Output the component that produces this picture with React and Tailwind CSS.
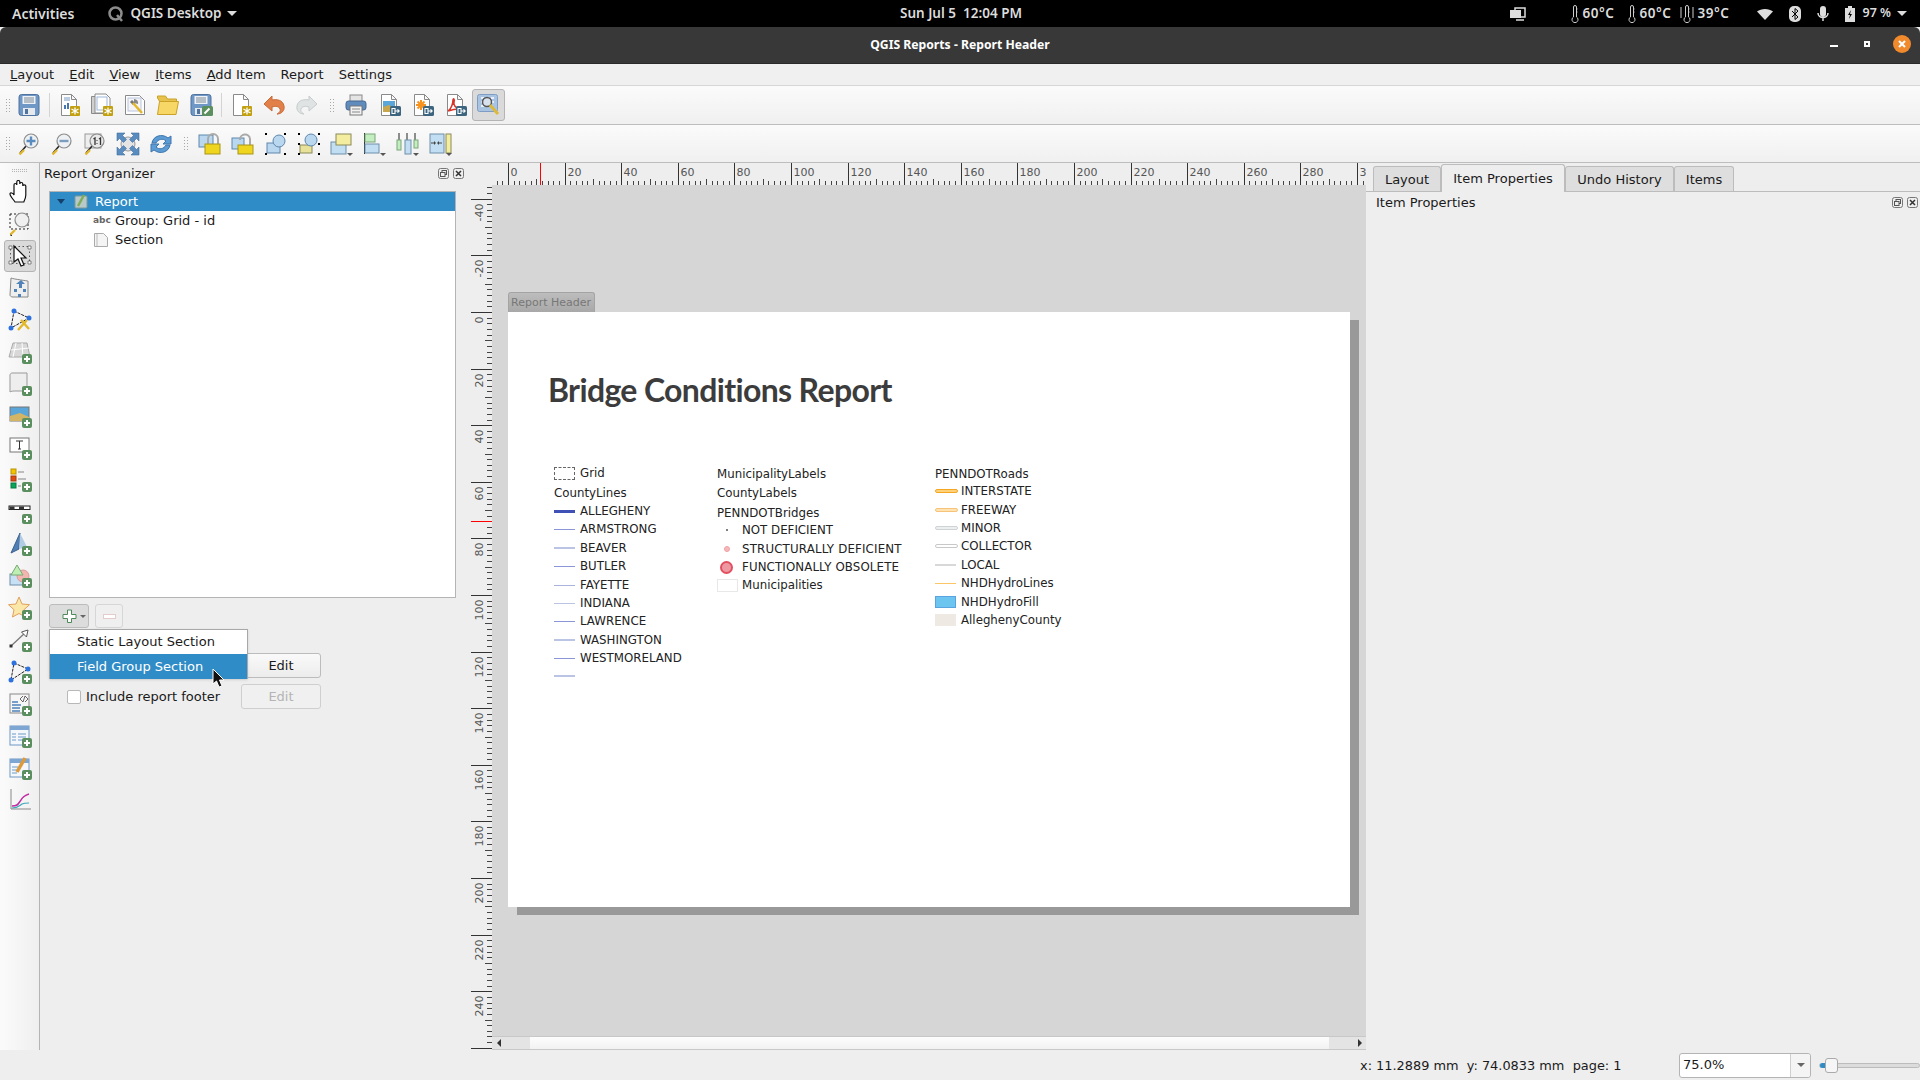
import React from "react";

const BLUE = "#308cc6";

// ---- small shared svg pieces ----
const Ic = ({ children, size = 24 }) => (
  <svg width={size} height={size} viewBox="0 0 24 24" className="shrink-0">{children}</svg>
);
const Plus = ({ x = 14, y = 14 }) => (
  <g>
    <rect x={x} y={y} width="10" height="10" rx="2" fill="#5b8f5f" />
    <path d={`M${x + 5} ${y + 2}v6M${x + 2} ${y + 5}h6`} stroke="#fff" strokeWidth="2" />
  </g>
);
const Gear = ({ x = 13, y = 13 }) => (
  <g>
    <rect x={x} y={y} width="10" height="10" rx="1" fill="#c2a010" />
    <path d={`M${x + 5} ${y + 1.5}v7M${x + 1.5} ${y + 3}l7 4M${x + 8.5} ${y + 3}l-7 4`} stroke="#fff" strokeWidth="1.3" />
  </g>
);
const Exp = () => (
  <g>
    <rect x="13" y="13" width="11" height="10" rx="1.5" fill="#3e6580" />
    <path d="M15 15.5h3v5h-3zM18 18h4M20.5 16.3l1.7 1.7-1.7 1.7" fill="none" stroke="#fff" strokeWidth="1.1" />
  </g>
);
const Page = ({ fill = "#fff" }) => (
  <path d="M4.5 1.5h10l5 5v16h-15z M14.5 1.5v5h5" fill={fill} stroke="#8a8a8a" strokeWidth="1" />
);
const Mag = ({ cx = 14, cy = 9, r = 7, fill = "#eef1f4" }) => (
  <g>
    <path d={`M${cx - r * 0.7} ${cy + r * 0.7}L3 21`} stroke="#222" strokeWidth="1.5" />
    <path d="M2.5 22.5l4.5-4.5" stroke="#e2b72c" strokeWidth="2.4" />
    <circle cx={cx} cy={cy} r={r} fill={fill} stroke="#8c8c8c" strokeWidth="1.2" />
  </g>
);
const Floppy = () => (
  <g>
    <rect x="2" y="1.5" width="20" height="21" rx="2.5" fill="#6f98c6" stroke="#4f729e" />
    <rect x="5.5" y="3" width="13" height="8" fill="#eef1f5" />
    <path d="M7 5h10M7 7h10M7 9h10" stroke="#7d8a99" />
    <rect x="6" y="15" width="12" height="7" fill="#e6e9ee" />
    <rect x="8" y="16" width="3" height="5" fill="#4f729e" />
  </g>
);

const icons = {
  save: <Floppy />,
  newReport: (
    <g>
      <Page fill="#fdfdfd" />
      <path d="M7 5h6M7 7h6" stroke="#7a9cc6" />
      <path d="M8 16v-4M11 16v-6" stroke="#4a76b0" strokeWidth="2" />
      <path d="M14 16v-2" stroke="#c65a5a" strokeWidth="2" />
      <Gear />
    </g>
  ),
  dup: (
    <g>
      <path d="M1.5 3.5h15v17h-15z" fill="#cfcfcf" stroke="#8a8a8a" />
      <path d="M5 1h11l4 4v15H5z" fill="#fff" stroke="#8a8a8a" />
      <rect x="7" y="4" width="10" height="13" fill="#fff" stroke="#9db7da" />
      <Gear />
    </g>
  ),
  manager: (
    <g>
      <path d="M2.5 2.5h14l5 5v14h-19z" fill="#fff" stroke="#8a8a8a" />
      <rect x="5" y="5" width="13" height="13" fill="#f4f4f8" stroke="#b8c5dc" />
      <path d="M8 8l3 3" stroke="#777" strokeWidth="3" />
      <path d="M10 10l9 10" stroke="#e2b72c" strokeWidth="2.6" />
      <path d="M11 6a4 4 0 0 1 4 5l-4-1z" fill="#888" />
    </g>
  ),
  open: (
    <g>
      <path d="M1.5 5V3h8l2 3h9v3H4z" fill="#e7c24c" stroke="#c9a227" />
      <path d="M3.5 8.5h19l-2.5 13H1.5z" fill="#f7d766" stroke="#c9a227" />
    </g>
  ),
  saveAs: (
    <g>
      <Floppy />
      <rect x="13" y="13" width="11" height="10" rx="1.5" fill="#5b8f5f" />
      <path d="M15.5 20.5l5-5" stroke="#fff" strokeWidth="2" />
    </g>
  ),
  newPage: (
    <g>
      <Page />
      <Gear />
    </g>
  ),
  undo: <path d="M10 3L2 11l8 7v-4c3-1 7-1 8 2 1 2-1 4-3 5 4 0 8-3 7-8-1-6-7-7-12-6z" fill="#e2804a" stroke="#c86a35" />,
  redo: <path d="M14 3l8 8-8 7v-4c-3-1-7-1-8 2-1 2 1 4 3 5-4 0-8-3-7-8 1-6 7-7 12-6z" fill="#dfe3e3" stroke="#c7cccc" />,
  print: (
    <g>
      <rect x="6" y="2" width="12" height="7" fill="#e4e4e4" stroke="#8a8a8a" />
      <rect x="2" y="8" width="20" height="9" rx="2.5" fill="#5f8bbd" stroke="#46688f" />
      <rect x="6" y="13" width="12" height="9" fill="#f2f2f2" stroke="#777" />
      <path d="M8 16h8M8 19h8" stroke="#888" />
    </g>
  ),
  expImg: (
    <g>
      <Page />
      <rect x="6" y="8" width="12" height="11" fill="#5aa6d8" />
      <path d="M6 19v-5l6-2 6 4v3z" fill="#c7a64e" />
      <Exp />
    </g>
  ),
  expSvg: (
    <g>
      <Page />
      <path d="M11 7v10M6 12h10M7.5 8.5l7 7M14.5 8.5l-7 7" stroke="#f5931e" strokeWidth="2" />
      <Exp />
    </g>
  ),
  expPdf: (
    <g>
      <Page />
      <path d="M5 18c3-2 5-7 5-11 0-2 2-1 1 2-1 3 2 6 5 7M5 18c3-1 7-2 11-2" fill="none" stroke="#d8352a" strokeWidth="1.6" />
      <Exp />
    </g>
  ),
  itemProps: (
    <g>
      <rect x="1.5" y="1.5" width="20" height="17" rx="2" fill="#a9c4e3" stroke="#7f9dc2" />
      <path d="M5 5h3M10 5h3M15 5h3M5 9h4M14 9h4M5 13h4" stroke="#fff" strokeWidth="1.4" />
      <circle cx="11" cy="9" r="4.5" fill="#d9e2ec" stroke="#555" strokeWidth="1.5" />
      <path d="M14 12l8 9" stroke="#dcb93c" strokeWidth="3" />
    </g>
  ),
  zoomIn: (
    <g>
      <Mag />
      <path d="M14 4.5v9M9.5 9h9" stroke="#5b8cc0" strokeWidth="2.4" />
    </g>
  ),
  zoomOut: (
    <g>
      <Mag />
      <path d="M9.5 9h9" stroke="#7c9cc0" strokeWidth="2.4" />
    </g>
  ),
  zoom100: (
    <g>
      <rect x="2" y="2" width="16" height="14" fill="#eee" stroke="#999" />
      <Mag fill="#e8e8e8" />
      <path d="M10.5 7l1.5-1v7M16 7l1.5-1v7" fill="none" stroke="#333" strokeWidth="1.3" />
      <path d="M14 8v.8M14 11v.8" stroke="#333" strokeWidth="1.3" />
    </g>
  ),
  zoomFull: (
    <g>
      <circle cx="12" cy="12" r="7" fill="#e4e4e4" stroke="#999" />
      <path d="M1 1h8l-2.5 2.5 4 4-3 3-4-4L1 9zM23 1v8l-2.5-2.5-4 4-3-3 4-4L15 1zM1 23v-8l2.5 2.5 4-4 3 3-4 4L9 23zM23 23h-8l2.5-2.5-4-4 3-3 4 4L23 15z" fill="#5b8cc0" stroke="#3f6ea3" strokeWidth="0.6" />
    </g>
  ),
  refresh: (
    <g>
      <path d="M3 11C4 4 13 1 19 6l3-2v8h-8l3-3c-3-3-8-2-10 2z" fill="#5d9bd4" stroke="#3f76ad" />
      <path d="M21 13c-1 7-10 10-16 5l-3 2v-8h8l-3 3c3 3 8 2 10-2z" fill="#5d9bd4" stroke="#3f76ad" />
    </g>
  ),
  lock: (
    <g>
      <rect x="1" y="3" width="14" height="12" fill="#b9d7ef" stroke="#5f87ab" />
      <path d="M10 13V7a5 5 0 0 1 10 0v6" fill="none" stroke="#aaa" strokeWidth="2" />
      <rect x="7" y="12" width="15" height="10" fill="#f0d51e" stroke="#a8951a" />
    </g>
  ),
  unlock: (
    <g>
      <rect x="1" y="6" width="12" height="11" fill="#b9d7ef" stroke="#5f87ab" />
      <path d="M9 8a5 5 0 0 1 10-1v6" fill="none" stroke="#aaa" strokeWidth="2" />
      <rect x="7" y="13" width="15" height="9" fill="#f0d51e" stroke="#a8951a" />
    </g>
  ),
  group: (
    <g>
      <rect x="3" y="11" width="13" height="10" fill="#b9d7ef" stroke="#5f87ab" />
      <circle cx="15" cy="9" r="6" fill="#b9d7ef" stroke="#5f87ab" />
      <path d="M1 1h2v2H1zM20 1h2v2h-2zM1 21h2v2H1zM20 21h2v2h-2z" fill="#000" />
    </g>
  ),
  ungroup: (
    <g>
      <rect x="3" y="13" width="12" height="8" fill="#e8e19a" stroke="#8a8a5a" />
      <circle cx="14" cy="8" r="6" fill="#b9d7ef" stroke="#5f87ab" />
      <path d="M1 1h2v2H1zM21 1h2v2h-2zM1 21h2v2H1zM21 21h2v2h-2zM1 11h2v2H1zM21 11h2v2h-2z" fill="#000" />
    </g>
  ),
  raise: (
    <g>
      <rect x="1" y="10" width="15" height="12" fill="#c2def3" stroke="#6f8faa" />
      <rect x="6" y="2" width="15" height="11" fill="#f3eda0" stroke="#8a8a5a" />
      <path d="M17 21h6l-3 3z" fill="#555" />
    </g>
  ),
  align: (
    <g>
      <path d="M1.5 1v21" stroke="#222" />
      <rect x="2" y="2" width="10" height="8" fill="#c3eec0" stroke="#7aa67a" />
      <rect x="2" y="12" width="14" height="9" fill="#c2def3" stroke="#6f8faa" />
      <path d="M17 21h6l-3 3z" fill="#555" />
    </g>
  ),
  distribute: (
    <g>
      <path d="M3 1v7M11 1v7M19 1v7" stroke="#222" />
      <rect x="1" y="8" width="4" height="10" fill="#c3eec0" stroke="#7aa67a" />
      <rect x="9" y="8" width="6" height="14" fill="#c2def3" stroke="#6f8faa" />
      <rect x="18" y="8" width="4" height="8" fill="#c3eec0" stroke="#7aa67a" />
      <path d="M17 21h6l-3 3z" fill="#555" />
    </g>
  ),
  resize: (
    <g>
      <rect x="1" y="2" width="14" height="19" fill="#c2def3" stroke="#6f8faa" />
      <rect x="17" y="2" width="5" height="19" fill="#f3eda0" stroke="#8a8a5a" />
      <path d="M2 11h3M13 11h-3" stroke="#444" />
      <path d="M5 9l2 2-2 2zM10 9l-2 2 2 2z" fill="#444" />
      <path d="M17 21h6l-3 3z" fill="#555" />
    </g>
  ),
  pan: (
    <path d="M7 22c-2-3-5-6-5-8 0-2 3-1 4 1V5c0-2 2.5-2 2.8 0V2c0-2 3-2 3 0v2c0-2 3-2 3 0v2c0-1.5 3-1.5 3 0v9c0 3-1 5-2 7z" fill="#fff" stroke="#111" strokeWidth="1.2" />
  ),
  zoomTool: (
    <g>
      <rect x="2" y="2" width="18" height="15" fill="none" stroke="#222" strokeDasharray="2 2" />
      <Mag cx="14" cy="8" r="7" fill="#f0f0f0" />
    </g>
  ),
  select: (
    <g>
      <rect x="2.5" y="2.5" width="19" height="17" fill="none" stroke="#555" strokeDasharray="1.5 2.5" />
      <path d="M1 2h3v3H1zM1 17h3v3H1zM20 2h3v3h-3zM20 17h3v3h-3z" fill="#fff" stroke="#555" strokeWidth="0.7" />
      <path d="M6 2v16l4-3 3 7 3-1-3-7h5z" fill="#fff" stroke="#111" strokeWidth="1.2" />
    </g>
  ),
  moveContent: (
    <g>
      <path d="M3 2c2 1 17 3 17 3v16H5c-2 0-3-1-3-2z" fill="#eee" stroke="#888" />
      <path d="M13 4l4 4h-3v4h-3V8H8zM6 13h3v3H6zM15 13h3v3h-3zM10 18h3v3h-3z" fill="#4f82b8" />
    </g>
  ),
  nodes: (
    <g>
      <path d="M6 3L21 10 3 20z" fill="none" stroke="#222" strokeDasharray="3 1" />
      <circle cx="6" cy="3" r="2.5" fill="#2e72e0" />
      <circle cx="21" cy="10" r="2.5" fill="#2e72e0" />
      <circle cx="3" cy="20" r="2.5" fill="#2e72e0" />
      <path d="M10 22l9-10M13 12l8 9" stroke="#e2b72c" strokeWidth="2.4" />
    </g>
  ),
  addMap: (
    <g>
      <path d="M5 3h14l3 14H1z" fill="#d8d8d8" stroke="#aaa" />
      <path d="M3 10l18-2M8 3L5 17M14 3l1 14" stroke="#fff" />
      <Plus />
    </g>
  ),
  add3d: (
    <g>
      <path d="M4 1h15v18H6c-3 0-4 1-4 1V3c0-1 1-2 2-2z" fill="#eee" stroke="#999" />
      <Plus />
    </g>
  ),
  addPic: (
    <g>
      <rect x="2" y="3" width="19" height="14" fill="#5aa6d8" stroke="#777" />
      <path d="M2 17v-5l10-3 9 4v4z" fill="#d4b465" />
      <Plus />
    </g>
  ),
  addLabel: (
    <g>
      <rect x="2" y="2" width="19" height="14" fill="#fff" stroke="#777" />
      <path d="M8 5h7M11.5 5v8M10 13h3" stroke="#333" />
      <Plus />
    </g>
  ),
  addLegend: (
    <g>
      <rect x="3" y="1" width="5" height="5" fill="#f5c400" stroke="#b89300" />
      <rect x="3" y="8" width="5" height="5" fill="#e04a10" stroke="#a33a0c" />
      <rect x="3" y="15" width="5" height="5" fill="#0aa55a" stroke="#087a42" />
      <path d="M10 4h6M10 11h8M10 18h3" stroke="#aaa" strokeWidth="1.5" />
      <Plus />
    </g>
  ),
  addScale: (
    <g>
      <rect x="1" y="6" width="21" height="3.5" fill="#fff" stroke="#222" />
      <path d="M1.5 8h5M11 8h5" stroke="#333" strokeWidth="3" />
      <Plus />
    </g>
  ),
  addNorth: (
    <g>
      <path d="M12 1L3 21l8-4z" fill="#4f7fb5" stroke="#3b618c" />
      <path d="M12 1l7 14-8 2z" fill="#b3cce6" />
      <Plus />
    </g>
  ),
  addShape: (
    <g>
      <rect x="2" y="10" width="17" height="11" fill="#c8e0f3" stroke="#6f8faa" />
      <circle cx="15" cy="12" r="6" fill="#f3b5b0" stroke="#d99" />
      <path d="M9 1l6 10H3z" fill="#bfeeb5" stroke="#79a873" />
      <Plus />
    </g>
  ),
  addStar: (
    <g>
      <path d="M11 1l3 7 7.5.7-5.500 5 1.500 7.300L11 17.500 4.500 21 6 13.700.5 8.700 8 8z" fill="#fbe7a8" stroke="#e0a060" />
      <Plus />
    </g>
  ),
  addArrow: (
    <g>
      <path d="M3 18L18 4" stroke="#777" strokeWidth="1.2" />
      <path d="M20 2l-1.5 7-5-5z" fill="#fff" stroke="#555" />
      <rect x="1.5" y="16.5" width="3" height="3" fill="#333" />
      <Plus />
    </g>
  ),
  addNode: (
    <g>
      <path d="M6 3L20 9 3 20z" fill="none" stroke="#222" strokeDasharray="3 1" />
      <circle cx="6" cy="3" r="2.5" fill="#2e72e0" />
      <circle cx="20" cy="9" r="2.5" fill="#2e72e0" />
      <circle cx="3" cy="20" r="2.5" fill="#2e72e0" />
      <Plus />
    </g>
  ),
  addHtml: (
    <g>
      <rect x="2" y="2" width="19" height="19" fill="#f6f6f6" stroke="#888" />
      <path d="M4 10h6M4 13h9M4 16h8M4 19h8" stroke="#4f82b8" strokeWidth="1.5" />
      <path d="M12 7l3-3M12 7l3 3M15 10l2-6M20 7l-3-3M20 7l-3 3" stroke="#444" strokeWidth="0.8" fill="none" />
      <Plus />
    </g>
  ),
  addTable: (
    <g>
      <rect x="2" y="2" width="19" height="19" fill="#f4f8fc" stroke="#6f98c6" />
      <rect x="2" y="2" width="19" height="4" fill="#7ea6d2" />
      <path d="M4 10h4M10 10h8M4 13h4M10 13h8M4 16h4M10 16h5" stroke="#6f98c6" />
      <Plus />
    </g>
  ),
  addTableEdit: (
    <g>
      <rect x="2" y="3" width="19" height="18" fill="#f4f8fc" stroke="#6f98c6" />
      <rect x="2" y="3" width="19" height="4" fill="#7ea6d2" />
      <path d="M4 11h6M4 14h5M4 17h5" stroke="#6f98c6" />
      <path d="M9 16L17 2" stroke="#dd9a3c" strokeWidth="3.5" />
      <Plus />
    </g>
  ),
  chart: (
    <g>
      <path d="M3 1v20h20" fill="none" stroke="#888" />
      <path d="M4 18c6 0 6-2 9-6 2-4 5-5 8-6" fill="none" stroke="#c02aa0" strokeWidth="1.5" />
      <path d="M4 20c6 0 7-2 10-4 2-1 5-1 7-1" fill="none" stroke="#3aa8b8" strokeWidth="1.2" />
    </g>
  ),
};

const Grip = () => (
  <div className="grid grid-cols-2 gap-[2px] shrink-0 w-[4px]">
    {[0, 1, 2, 3, 4, 5, 6, 7, 8, 9].map((i) => (
      <span key={i} className="w-[1px] h-[1px] bg-[#a8a8a8]" />
    ))}
  </div>
);
const GripH = () => (
  <div className="grid grid-cols-8 gap-[1px] shrink-0">
    {Array.from({ length: 16 }).map((_, i) => (
      <span key={i} className="w-[1px] h-[1px] bg-[#b4b4b4]" />
    ))}
  </div>
);
const Sep = () => <div className="w-[1px] h-[24px] bg-[#d4d4d4] mx-[3px] shrink-0" />;

function TB({ name, active }) {
  return (
    <div
      className={`relative w-[33px] h-[32px] flex items-center justify-center shrink-0 rounded-[3px] ${
        active ? "bg-[#dadada] border border-[#b4b4b4]" : ""
      }`}
    >
      <Ic>{icons[name]}</Ic>
    </div>
  );
}

const T1 = ["save", "|", "newReport", "dup", "manager", "open", "saveAs", "|", "newPage", "undo", "redo", "#", "print", "expImg", "expSvg", "expPdf", "itemProps"];
const T2 = ["zoomIn", "zoomOut", "zoom100", "zoomFull", "refresh", "#", "lock", "unlock", "group", "ungroup", "raise", "align", "distribute", "resize"];
const LEFT = ["pan", "zoomTool", "select", "moveContent", "nodes", "addMap", "add3d", "addPic", "addLabel", "addLegend", "addScale", "addNorth", "addShape", "addStar", "addArrow", "addNode", "addHtml", "addTable", "addTableEdit", "chart"];

function Toolbar({ items, className }) {
  return (
    <div className={`flex items-center pl-[6px] bg-gradient-to-b from-[#fbfbfb] to-[#f0f0f0] border-b border-[#bdbdbd] ${className}`}>
      <Grip />
      <div className="w-[2.5px] shrink-0" />
      {items.map((it, i) =>
        it === "|" ? (
          <Sep key={i} />
        ) : it === "#" ? (
          <div key={i} className="mx-[6px] shrink-0"><Grip /></div>
        ) : (
          <TB key={i} name={it} active={it === "itemProps"} />
        )
      )}
    </div>
  );
}

const FloatIcons = () => (
  <div className="flex gap-[4px]">
    <svg width="11" height="11" viewBox="0 0 11 11"><rect x="0.5" y="0.5" width="10" height="10" rx="2" fill="none" stroke="#777" /><rect x="4" y="2.5" width="4.5" height="4" fill="none" stroke="#555" /><rect x="2.5" y="4.5" width="4.5" height="4" fill="#eee" stroke="#555" /></svg>
    <svg width="11" height="11" viewBox="0 0 11 11"><rect x="0.5" y="0.5" width="10" height="10" rx="2" fill="none" stroke="#777" /><path d="M3 3l5 5M8 3l-5 5" stroke="#333" strokeWidth="1.5" /></svg>
  </div>
);

function HRuler() {
  const W = 895;
  const org = 37; // x of 0 within the ruler
  const ticks = [];
  for (let u = -4; u <= 304; u += 2) {
    const x = Math.round(org + u * 2.83) + 0.5;
    const major = u % 20 === 0;
    const mid = u % 10 === 0;
    ticks.push(<path key={u} d={`M${x} ${major ? 0 : mid ? 16 : 18}V22`} stroke={major ? "#333" : "#444"} />);
    if (major && u >= 0)
      ticks.push(<text key={`t${u}`} x={x + 2} y="13" fontSize="11" fill="#555" fontFamily="DejaVu Sans">{u}</text>);
  }
  return (
    <svg width={W} height="22" className="block shrink-0">
      {ticks}
      <path d="M69.5 0V22" stroke="#f00" />
    </svg>
  );
}

function VRuler() {
  const H = 865;
  const org = 127;
  const ticks = [];
  for (let u = -44; u <= 260; u += 2) {
    const y = Math.round(org + u * 2.83) + 0.5;
    const major = u % 20 === 0;
    const mid = u % 10 === 0;
    ticks.push(<path key={u} d={`M${major ? 0 : mid ? 14 : 16} ${y}H21`} stroke={major ? "#333" : "#444"} />);
    if (major && u >= -40 && u <= 240)
      ticks.push(
        <text key={`t${u}`} fontSize="11" fill="#555" fontFamily="DejaVu Sans" textAnchor="end" transform={`translate(12 ${y + 4}) rotate(-90)`}>
          {u}
        </text>
      );
  }
  return (
    <svg width="21" height={H} className="block shrink-0">
      {ticks}
      <path d="M0 336.5H21" stroke="#f00" />
    </svg>
  );
}

// legend swatches
const Line = ({ c, w = 1, cls = "" }) => <span className={`block w-[21px] ${cls}`} style={{ height: w, background: c }} />;
const Road = ({ c, b }) => <span className="block w-[23px] h-[4px] rounded-[2px] border" style={{ background: c, borderColor: b }} />;

const COL1 = [
  { h: "h-[20px]", sw: <span className="block w-[21px] h-[13px] border border-dashed border-[#666]" />, t: "Grid" },
  { h: "h-[18px]", t: "CountyLines", head: true },
  { h: "h-[18px]", sw: <Line c="#3f51b5" w={3} />, t: "ALLEGHENY" },
  { h: "h-[19px]", sw: <Line c="#8a96d8" />, t: "ARMSTRONG" },
  { h: "h-[18px]", sw: <Line c="#bcc4e6" w={2} />, t: "BEAVER" },
  { h: "h-[19px]", sw: <Line c="#8a96d8" />, t: "BUTLER" },
  { h: "h-[18px]", sw: <Line c="#aab3e0" />, t: "FAYETTE" },
  { h: "h-[18px]", sw: <Line c="#bcc4e6" />, t: "INDIANA" },
  { h: "h-[19px]", sw: <Line c="#8a96d8" />, t: "LAWRENCE" },
  { h: "h-[18px]", sw: <Line c="#bcc4e6" w={2} />, t: "WASHINGTON" },
  { h: "h-[18px]", sw: <Line c="#8a96d8" />, t: "WESTMORELAND" },
  { h: "h-[18px]", sw: <Line c="#bcc4e6" w={2} />, t: "" },
];
const Dot = ({ cls }) => <span className={`block rounded-full mx-auto ${cls}`} />;
const COL2 = [
  { h: "h-[19px]", t: "MunicipalityLabels", head: true },
  { h: "h-[20px]", t: "CountyLabels", head: true },
  { h: "h-[17px]", t: "PENNDOTBridges", head: true },
  { h: "h-[19px]", sw: <Dot cls="w-[2px] h-[2px] bg-[#555]" />, t: "NOT DEFICIENT" },
  { h: "h-[18px]", sw: <Dot cls="w-[6px] h-[6px] bg-[#f5b8bc] border border-[#f2a0a5]" />, t: "STRUCTURALLY DEFICIENT", cls: "tracking-[0.17px]" },
  { h: "h-[18px]", sw: <Dot cls="w-[13px] h-[13px] bg-[#ee98a2] border-2 border-[#e2505f]" />, t: "FUNCTIONALLY OBSOLETE", cls: "tracking-[0.12px]" },
  { h: "h-[18px]", sw: <span className="block w-[21px] h-[13px] border border-[#e8e8e8] bg-white" />, t: "Municipalities" },
];
const COL3 = [
  { h: "h-[17px]", t: "PENNDOTRoads", head: true },
  { h: "h-[19px]", sw: <Road c="#ffd27a" b="#f5a623" />, t: "INTERSTATE" },
  { h: "h-[18px]", sw: <Road c="#ffe3b0" b="#f7c27a" />, t: "FREEWAY" },
  { h: "h-[18px]", sw: <Road c="#eceff0" b="#d0d3d4" />, t: "MINOR" },
  { h: "h-[19px]", sw: <Road c="#fff" b="#c8c8c8" />, t: "COLLECTOR" },
  { h: "h-[18px]", sw: <Line c="#d8d8d8" w={2} />, t: "LOCAL" },
  { h: "h-[19px]", sw: <Line c="#fbc766" />, t: "NHDHydroLines" },
  { h: "h-[18px]", sw: <span className="block w-[21px] h-[12px] bg-[#6cc5ee] border border-[#5aa2e0]" />, t: "NHDHydroFill" },
  { h: "h-[18px]", sw: <span className="block w-[21px] h-[12px] bg-[#efe9e4]" />, t: "AlleghenyCounty" },
];

function LegendCol({ rows, w, gap }) {
  return (
    <div className={`flex flex-col shrink-0 ${w}`}>
      {rows.map((r, i) =>
        r.head ? (
          <div key={i} className={`${r.h} leading-[18px] whitespace-nowrap`}>{r.t}</div>
        ) : (
          <div key={i} className={`${r.h} flex items-start whitespace-nowrap`}>
            <div className={`h-[18px] flex items-center shrink-0 ${gap}`}>
              <div className="w-full">{r.sw}</div>
            </div>
            <span className={`leading-[18px] ${r.cls || ""}`}>{r.t}</span>
          </div>
        )
      )}
    </div>
  );
}

export default function App() {
  return (
    <div className="w-[1920px] h-[1080px] overflow-hidden flex flex-col bg-[#eeeeee] text-[13px] text-[#1a1a1a] font-['DejaVu_Sans',sans-serif]">
      {/* GNOME top bar */}
      <div className="h-[27px] bg-black text-[#dcdcdc] flex items-center relative shrink-0 text-[13.5px] font-semibold font-['Noto_Sans',sans-serif]">
        <span className="ml-[12px] text-[14px]">Activities</span>
        <svg width="18" height="18" viewBox="0 0 18 18" className="ml-[33px]">
          <circle cx="8.5" cy="8.5" r="6" fill="none" stroke="#8c8c8c" strokeWidth="2.5" />
          <path d="M10 10l5 6" stroke="#8c8c8c" strokeWidth="2.5" />
        </svg>
        <span className="ml-[5px]">QGIS Desktop</span>
        <span className="ml-[6px] w-0 h-0 border-x-[5px] border-x-transparent border-t-[5px] border-t-[#dcdcdc]" />
        <span className="absolute left-[900px] whitespace-pre">Sun Jul 5  12:04 PM</span>

        <div className="ml-auto flex items-center pr-[13px]">
          <svg width="16" height="14" viewBox="0 0 16 14" className="mr-[45px]">
            <rect x="5" y="1" width="10" height="9" fill="none" stroke="#ddd" strokeWidth="1.5" />
            <rect x="0" y="3" width="11" height="8" fill="#ddd" />
            <path d="M6 13h8" stroke="#ddd" strokeWidth="1.5" />
          </svg>
          <Thermo />
          <span className="ml-[4px] w-[45px] tracking-[0.5px]">60°C</span>
          <Thermo />
          <span className="ml-[4px] w-[40px] tracking-[0.5px]">60°C</span>
          <Thermo double />
          <span className="ml-[4px] w-[38px] tracking-[0.5px]">39°C</span>
          <svg width="16" height="12" viewBox="0 0 16 12" className="ml-[21px]"><path d="M0 3.5C4 0 12 0 16 3.5L8 12z" fill="#ddd" /></svg>
          <svg width="12" height="16" viewBox="0 0 12 16" className="ml-[16px]"><rect width="12" height="16" rx="5" fill="#ddd" /><path d="M3 5l6 6-3 2.5v-11l3 2.5-6 6" fill="none" stroke="#000" /></svg>
          <svg width="12" height="16" viewBox="0 0 12 16" className="ml-[16px]"><rect x="3" width="6" height="11" rx="3" fill="#ddd" /><path d="M1 7c0 6 10 6 10 0M6 12v3" fill="none" stroke="#ddd" strokeWidth="1.5" /></svg>
          <svg width="10" height="16" viewBox="0 0 10 16" className="ml-[16px]"><path d="M3 0h4v2h3v14H0V2h3z" fill="#ddd" /><path d="M6 4L3 9h2l-1 4 3-5H5z" fill="#000" /></svg>
          <span className="ml-[8px] text-[12.5px]">97 %</span>
          <span className="ml-[6px] w-0 h-0 border-x-[5px] border-x-transparent border-t-[5px] border-t-[#dcdcdc]" />
        </div>
      </div>

      {/* window title bar */}
      <div className="h-[37px] bg-[#383838] rounded-t-[6px] border-b border-[#2a2a2a] pt-[1px] relative flex items-center justify-center shrink-0 text-white text-[12.2px] font-bold font-['Noto_Sans',sans-serif]">
        QGIS Reports - Report Header
        <div className="absolute right-[9px] top-[8px] flex items-center">
          <span className="w-[8px] h-[2px] bg-white mt-[3px] mr-[26px]" />
          <span className="w-[6px] h-[6px] border-2 border-white mr-[23px]" />
          <span className="w-[18px] h-[18px] rounded-full bg-[#f08a2c] flex items-center justify-center">
            <svg width="10" height="10" viewBox="0 0 10 10"><path d="M2 2l6 6M8 2l-6 6" stroke="#fff" strokeWidth="2" /></svg>
          </span>
        </div>
      </div>

      {/* menu bar */}
      <div className="h-[22px] bg-[#f0f0f0] border-b border-[#d6d6d6] flex items-center pl-[10px] gap-[15px] shrink-0">
        {[["L", "ayout"], ["E", "dit"], ["V", "iew"], ["I", "tems"], ["A", "dd Item"], ["", "Report"], ["", "Settings"]].map(([u, r]) => (
          <span key={r}><span className="underline">{u}</span>{r}</span>
        ))}
      </div>

      <Toolbar items={T1} className="h-[39px] shrink-0" />
      <Toolbar items={T2} className="h-[38px] shrink-0" />

      {/* main */}
      <div className="flex-1 flex min-h-0">
        {/* left tool strip */}
        <div className="w-[40px] shrink-0 border-r border-[#b4b4b4] bg-gradient-to-r from-[#fbfbfb] to-[#efefef] flex flex-col items-center pt-[6px]">
          <GripH />
          <div className="h-[4px] shrink-0" />
          {LEFT.map((n) => (
            <div
              key={n}
              className={`w-[32px] h-[32px] flex items-center justify-center shrink-0 rounded-[3px] ${n === "select" ? "bg-[#dadada] border border-[#b4b4b4]" : ""}`}
            >
              <Ic>{icons[n]}</Ic>
            </div>
          ))}
        </div>

        {/* report organizer */}
        <div className="w-[431px] shrink-0 flex flex-col relative">
          <div className="h-[28px] flex items-start pt-[1px] justify-between pl-[4px] pr-[7px] shrink-0">
            <span>Report Organizer</span>
            <div className="mt-[4px]"><FloatIcons /></div>
          </div>
          <div className="ml-[9px] w-[407px] h-[407px] bg-white border border-[#b4b4b4] shrink-0">
            <div className="h-[19px] text-white flex items-center" style={{ background: BLUE }}>
              <span className="ml-[7px] w-0 h-0 border-x-[4px] border-x-transparent border-t-[5px] border-t-[#14406b]" />
              <svg width="14" height="15" viewBox="0 0 14 15" className="ml-[9px]"><rect x="1" y="2" width="12" height="12" rx="1" fill="#b9c8c8" stroke="#7d9a9a" /><path d="M4 12L10 1" stroke="#7fae5a" strokeWidth="2.5" /></svg>
              <span className="ml-[7px]">Report</span>
            </div>
            <div className="h-[19px] flex items-center pl-[43px]">
              <span className="w-[22px] text-[9px] font-bold text-[#666]">abc</span>
              <span>Group: Grid - id</span>
            </div>
            <div className="h-[19px] flex items-center pl-[43px]">
              <svg width="16" height="16" viewBox="0 0 16 16" className="mr-[6px]"><path d="M1.5 1.5h9l4 4v9h-13z" fill="#f4f4f4" stroke="#aaa" /><path d="M4 2v12" stroke="#bbb" /></svg>
              <span>Section</span>
            </div>
          </div>
          <div className="mt-[6px] ml-[9px] flex gap-[6px] shrink-0">
            <div className="w-[40px] h-[24px] rounded-[3px] border border-[#bcbcbc] bg-[#dcdcdc] flex items-center pl-[12px] gap-[3px]">
              <svg width="15" height="15" viewBox="0 0 15 15"><path d="M5.5 1h4v4.5h4.5v4H9.5v4h-4v-4H1v-4h4.5z" fill="#fff" stroke="#4d8a5a" /></svg>
              <span className="w-0 h-0 border-x-[3px] border-x-transparent border-t-[3px] border-t-[#666]" />
            </div>
            <div className="w-[28px] h-[24px] rounded-[3px] border border-[#d6d6d6] bg-[#efefef] flex items-center justify-center">
              <span className="w-[13px] h-[5px] bg-white border border-[#e4cccc]" />
            </div>
          </div>
          {/* rows under the dropdown */}
          <div className="mt-[25px] ml-[201px] w-[80px] h-[25px] rounded-[3px] border border-[#bcbcbc] bg-gradient-to-b from-[#fafafa] to-[#ececec] flex items-center justify-center shrink-0">Edit</div>
          <div className="mt-[6px] ml-[27px] flex items-center shrink-0">
            <span className="w-[14px] h-[14px] bg-white border border-[#b8b8b8] rounded-[2px]" />
            <span className="ml-[5px] w-[155px]">Include report footer</span>
            <div className="w-[80px] h-[25px] rounded-[3px] border border-[#cfcfcf] bg-[#f0f0f0] text-[#b4b4b4] flex items-center justify-center">Edit</div>
          </div>

          {/* dropdown */}
          <div className="absolute left-[9px] top-[466px] w-[199px] h-[50px] bg-white border border-[#a8a8a8] shadow-sm z-10">
            <div className="h-[24px] flex items-center pl-[27px]">Static Layout Section</div>
            <div className="h-[25px] flex items-center pl-[27px] text-white" style={{ background: BLUE }}>Field Group Section</div>
          </div>
          {/* mouse cursor */}
          <svg width="14" height="20" viewBox="0 0 14 20" className="absolute left-[172px] top-[505px] z-20">
            <path d="M1 1v15l3.5-3 2.5 6 3-1-2.5-6H12z" fill="#111" stroke="#fff" strokeWidth="1" />
          </svg>
        </div>

        {/* layout view */}
        <div className="w-[895px] shrink-0 flex flex-col min-h-0">
          <HRuler />
          <div className="flex flex-1 min-h-0">
            <VRuler />
            <div className="flex-1 bg-[#d6d6d6] overflow-hidden pl-[16px] pt-[107px]">
              <div className="w-[87px] h-[20px] rounded-t-[3px] border border-b-0 border-[#a4a4a4] bg-gradient-to-b from-[#bdbdbd] to-[#a8a8a8] text-[#777] text-[11px] leading-[19px] pl-[2px] whitespace-nowrap">Report Header</div>
              <div className="w-[842px] h-[595px] bg-white shadow-[9px_8px_0_#999999] text-[11.8px] text-[#222]">
                <div className="pl-[40px] pt-[58px] h-[152px]">
                  <h1 className="text-[32px] tracking-[-0.65px] leading-[40px] font-bold text-[#3c3c3c] whitespace-nowrap font-['Lato',sans-serif]">Bridge Conditions Report</h1>
                </div>
                <div className="flex pl-[46px]">
                  <LegendCol rows={COL1} w="w-[163px]" gap="w-[26px] pr-[5px]" />
                  <div className="w-[218px] shrink-0 pt-[1px]"><LegendCol rows={COL2} gap="w-[25px] pr-[6px]" /></div>
                  <div className="pt-[1px]"><LegendCol rows={COL3} gap="w-[26px] pr-[3px]" /></div>
                </div>
              </div>
            </div>
          </div>
          {/* scrollbar */}
          <div className="h-[14px] -mt-[14px] ml-[21px] relative bg-[#e4e4e4] border-y border-[#c8c8c8] flex items-center shrink-0">
            <span className="ml-[5px] w-0 h-0 border-y-[4px] border-y-transparent border-r-[4px] border-r-[#333]" />
            <div className="ml-[29px] w-[799px] h-full bg-gradient-to-b from-[#fdfdfd] to-[#f2f2f2]" />
            <span className="ml-auto mr-[4px] w-0 h-0 border-y-[4px] border-y-transparent border-l-[4px] border-l-[#333]" />
          </div>
        </div>

        {/* right dock */}
        <div className="flex-1 flex flex-col min-w-0">
          <div className="h-[29px] flex items-end pl-[7px] border-b border-[#bcbcbc] shrink-0">
            <Tab w="w-[68px]">Layout</Tab>
            <Tab w="w-[124px]" active>Item Properties</Tab>
            <Tab w="w-[109px]">Undo History</Tab>
            <Tab w="w-[60px]">Items</Tab>
          </div>
          <div className="flex items-center justify-between pl-[10px] pr-[2px] h-[21px] shrink-0">
            <span>Item Properties</span>
            <FloatIcons />
          </div>
        </div>
      </div>

      {/* status bar */}
      <div className="h-[30px] shrink-0 bg-[#eeeeee] flex items-center pl-[1360px]">
        <span className="whitespace-pre w-[319px] text-[12.9px] mt-[1px]">x: 11.2889 mm  y: 74.0833 mm  page: 1</span>
        <div className="w-[132px] h-[25px] bg-white border border-[#b4b4b4] rounded-[3px] flex items-center">
          <span className="pl-[3px] flex-1">75.0%</span>
          <span className="w-[20px] h-full border-l border-[#cfcfcf] bg-[#f4f4f4] rounded-r-[3px] flex items-center justify-center">
            <span className="w-0 h-0 border-x-[4px] border-x-transparent border-t-[4px] border-t-[#666]" />
          </span>
        </div>
        <div className="ml-[8px] flex-1 relative h-[5px] bg-[#dcdcdc] border border-[#bcbcbc] rounded-[3px]">
          <span className="absolute left-0 top-[-1px] w-[8px] h-[5px] bg-[#308cc6] rounded-l-[3px]" />
          <span className="absolute left-[5px] top-[-6px] w-[13px] h-[15px] bg-[#f6f6f6] border border-[#aaa] rounded-[3px]" />
        </div>
      </div>
    </div>
  );
}

function Tab({ w, active, children }) {
  return active ? (
    <div className={`${w} h-[28px] -mb-[1px] bg-[#eeeeee] border border-b-0 border-[#bcbcbc] rounded-t-[3px] flex items-center justify-center`}>{children}</div>
  ) : (
    <div className={`${w} h-[25px] bg-[#dedede] border border-b-0 border-[#bcbcbc] rounded-t-[3px] flex items-center justify-center pt-[1px]`}>{children}</div>
  );
}

function Thermo({ className = "", double }) {
  return (
    <svg width={double ? 14 : 8} height="18" viewBox={double ? "0 0 14 18" : "0 0 8 18"} className={className}>
      <g transform={double ? "translate(3 0)" : ""}>
        <path d="M2.5 2a1.5 1.5 0 0 1 3 0v10a3 3 0 1 1-3 0z" fill="none" stroke="#ccc" />
        <path d="M5.5 4h1M5.5 7h1" stroke="#ccc" />
      </g>
      {double && <path d="M1 2v11M13 2v11" stroke="#ccc" />}
    </svg>
  );
}
